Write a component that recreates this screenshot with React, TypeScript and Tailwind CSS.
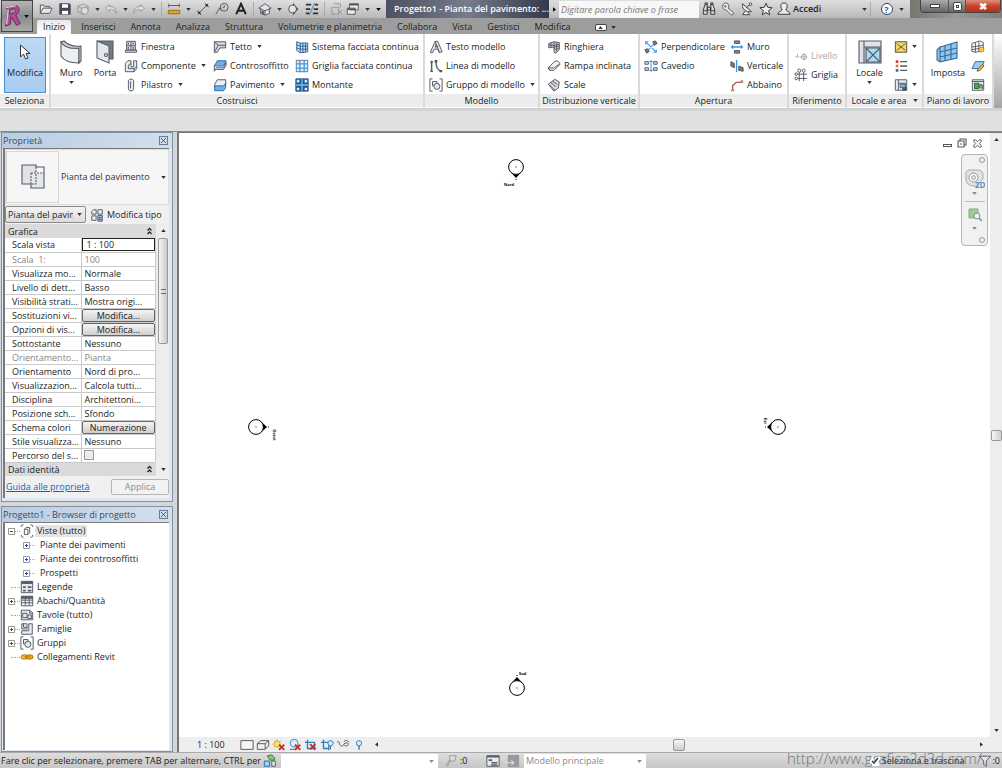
import type { ReactNode } from 'react'

interface GlyphProps {
  children: ReactNode
  className?: string
  box?: string
}

function Glyph({ children, className = 'size-3.5', box = '0 0 16 16' }: GlyphProps) {
  return (
    <svg viewBox={box} className={`shrink-0 ${className}`} fill="none" stroke="#555b65" strokeWidth="1.1" aria-hidden="true">
      {children}
    </svg>
  )
}

function Caret({ className = 'text-[#333]' }: { className?: string }) {
  return (
    <svg viewBox="0 0 6 4" className={`h-[3px] w-[5px] shrink-0 ${className}`} aria-hidden="true">
      <path d="M0 0h6L3 4z" fill="currentColor" />
    </svg>
  )
}

const icons = {
  open: <Glyph><path d="M1.500 13V3.500h4l1 1.500H12v2M1.500 13l3-6H15l-3 6z" fill="#e8e8e8" /></Glyph>,
  save: <Glyph><path d="M2 2h11l1 1v11H2z" fill="#3f4650" /><path d="M4.500 2.500h7v4h-7zM4.500 10h7v4h-7z" fill="#fff" stroke="none" /></Glyph>,
  sync: <Glyph><path d="M2 5l6-3 6 3v6l-6 3-6-3zM2 5l6 3 6-3M8 8v6" stroke="#999" /><circle cx="10" cy="10" r="4" fill="#ddd" stroke="#999" /></Glyph>,
  undo: <Glyph><path d="M6 3L1.500 7 6 11V9c4-1 6 0 8 4 0-6-3-8-8-8z" stroke="#999" fill="#ddd" /></Glyph>,
  redo: <Glyph><path d="M10 3l4.500 4L10 11V9c-4-1-6 0-8 4 0-6 3-8 8-8z" stroke="#999" fill="#ddd" /></Glyph>,
  measure: <Glyph><path d="M2 2v4M14 2v4M2 4h12" /><path d="M1.500 9.500h13v4h-13z" fill="#e3a22a" stroke="#a06c12" /></Glyph>,
  dimension: <Glyph><path d="M3 13L13 3M1 10l5 5M10 1l5 5" /><path d="M2 14l1-4 3 3zM14 2l-4 1 3 3z" fill="#333" stroke="none" /></Glyph>,
  tag: <Glyph><path d="M1 14l4-7 2 3M5 7h2" /><circle cx="10.500" cy="6" r="4.500" /><path d="M10.500 3.500v3h-2" /></Glyph>,
  text: <Glyph><path d="M2.500 14L8 2l5.500 12M4.500 10h7" stroke="#222" strokeWidth="2.200" /></Glyph>,
  cube: <Glyph><path d="M1 7l7-5 7 5-2 1v5l-5 2-5-2V8z" fill="#e4e4e4" /><path d="M1 7l7 3 7-3M8 10v5" /><path d="M4.500 10v3l2 1v-3z" fill="#555" /></Glyph>,
  section: <Glyph><path d="M8 1l6 7-6 7z" fill="#333" stroke="none" /><circle cx="7.500" cy="8" r="4.500" fill="#e4e4e4" /></Glyph>,
  thinLines: <Glyph><path d="M1 3h6M1 8h5M1 13h4M11 3h4M10 8h5M9 13h6" strokeWidth="2" stroke="#333" /><path d="M5 15L11 1" stroke="#3b8be0" /></Glyph>,
  closeHidden: <Glyph><path d="M4 2h8v4M2 6h8v8H2zM9 9l5 5M14 9l-5 5" stroke="#999" /></Glyph>,
  switchWin: <Glyph><path d="M4 2h10v7H4zM1.500 7h9v7h-9z" fill="#eee" /><path d="M4 3h10M1.500 8h9" strokeWidth="2" /></Glyph>,
  binoculars: <Glyph><path d="M1.500 9l2-6h2.500v11H1.500zM14.500 9l-2-6H10v11h4.500zM6 6h4v3H6zM3.500 3V1h2.500v2M10 3V1h2.500v2M1.500 10H6M10 10h4.500" fill="#ddd" stroke="#333" /></Glyph>,
  key: <Glyph><path d="M2 5a3.500 3.500 0 1 1 6 2l6 5v2l-2 1-6-6a3.500 3.500 0 0 1-4-4z" fill="#eee" /><circle cx="5" cy="5" r="1" /></Glyph>,
  dish: <Glyph><path d="M3 2c-1 6 3 10 10 9zM7 7l4-4M6 10l-3 4.500h8L9 11.500" fill="#eee" stroke="#444" /><circle cx="12" cy="2.500" r="1.500" fill="#eee" stroke="#444" /></Glyph>,
  star: <Glyph><path d="M8 1.500l2 4.500 5 .5-4 3.300 1.300 5L8 12l-4.300 2.800L5 9.800 1 6.500 6 6z" fill="#eee" stroke="#333" /></Glyph>,
  user: <Glyph><path d="M8 1c5 0 4 6 2 8 1 2 4 1 5 5H1c1-4 4-3 5-5C4 7 3 1 8 1z" fill="#eee" stroke="#333" /></Glyph>,
  finestra: <Glyph><path d="M3 1.500h10v10H3zM1.500 14h13v-2.500h-13zM8 1.500v10M3 6.500h10" fill="#dfe3e8" /><path d="M5 3v2M10.500 3v2M5 8v2M10.500 8v2" strokeWidth="1.500" /></Glyph>,
  componente: <Glyph><path d="M1.500 5l3-3H8v7h3V2h3.500v9l-3 3.500h-10z" fill="#e8ebef" /><path d="M8 5L5 7v4h6.500v3.500M11.500 11l3-2" /></Glyph>,
  pilastro: <Glyph><path d="M5 3.500c0-3 6-3 6 0v9c0 3-6 3-6 0zM7.500 4v8" fill="#e8ebef" /></Glyph>,
  tetto: <Glyph><path d="M1.500 2h13v7H8l-3 5H1.500z" fill="#d4d8de" /><path d="M1.500 14L6 6h8.500M6 6L1.500 2" /></Glyph>,
  controsoffitto: <Glyph><path d="M5 2h10l-3 6H1.500z" fill="#6cb2ee" stroke="#2c6cab" /><path d="M1.500 8v6l2.500-4h8l3-6v3l-3 5H4" fill="#e8ebef" /></Glyph>,
  pavimento: <Glyph><path d="M5 2h9.500v5L12 11H2V7z" fill="#eceff2" /><path d="M2 9h10l2.500-3v5L12 14.500H2z" fill="#6cb2ee" stroke="#2c6cab" /></Glyph>,
  sistema: <Glyph><path d="M2 2l4 1.500h8.500v10L6 14.500 2 12z" fill="#cfe5f8" stroke="#2c5f91" /><path d="M6 3.500v11M9 3.500v11M12 3.500v10M2 5.500l4 1.500h8.500M2 9l4 1.500h8.500" stroke="#2c5f91" /></Glyph>,
  griglia: <Glyph><path d="M1.500 1.500h13v13h-13z" fill="#e4f1fc" stroke="#6b7683" /><path d="M5.500 1v14M10.500 1v14M1 5.500h14M1 10.500h14" stroke="#4597df" strokeWidth="1.500" /></Glyph>,
  montante: <Glyph><path d="M1 1h14v14H1z" fill="#1f5c94" stroke="#1f4d79" /><path d="M2 2h3v3H2zM11 2h3v3h-3zM2 11h3v3H2zM11 11h3v3h-3z" fill="#d5ebfb" stroke="none" /><path d="M1 8h14M8 1v14" stroke="#79bdf5" strokeWidth="1.500" /></Glyph>,
  testo: <Glyph><path d="M1.500 14L7 1.500h3l5 12-3 1-2-4H6l-2 4zM7 8l1-3 1.500 3z" fill="#e2e5e9" /><path d="M7 1.500l5 13" /></Glyph>,
  linea: <Glyph><path d="M3 2v12M1.500 3.500h3M1.500 14h3M8 2c0 7 1 11 7 12" strokeWidth="1.600" /><path d="M6.500 1h3v3h-3zM12 12.500h3v2.500h-3z" fill="#555" stroke="none" /></Glyph>,
  gruppo: <Glyph><path d="M4 1H1v14h3M12 1h3v14h-3" /><path d="M4 4h5v5H4z" fill="#eee" /><circle cx="9" cy="9.500" r="3.500" fill="#e2e5e9" /></Glyph>,
  ringhiera: <Glyph><path d="M2 4l6-2 6 1v8l-4 4-2-1V8L2 9zM2 6h6l6-1M8 2v8M11 3v10M4.500 3v6M8 8l6-1M9 11l5-2" fill="#cdd1d7" /></Glyph>,
  rampa: <Glyph><path d="M1.500 10L9 2.500c3-1 6 1 5.500 4L8 13H3z" fill="#f1f3f5" /><path d="M3 13l-1.500-3 6 .5L14 6" /></Glyph>,
  scale: <Glyph><path d="M1.500 7L9 1.500l5 3-1 7-5 3.500zM4 5l6 5M6 3.500l6 4M3 8l6 6" fill="#d8dbe0" /></Glyph>,
  perpendicolare: <Glyph><path d="M3 3l10 10M3 13L13 3M2 5V2h3M14 11v3h-3" stroke="#3b94e6" strokeWidth="1.300" /><path d="M10 2l3-1 2 3-3 2zM1 11l3-1 2 3-3 2z" fill="#777" /></Glyph>,
  cavedio: <Glyph><path d="M1 3h4v3H1zM1 10h4v3H1zM11 3h4v3h-4zM11 10h4v3h-4z" fill="#ddd" /><path d="M8 1v14M6 3h4M6 13h4" stroke="#3b94e6" /></Glyph>,
  muroApertura: <Glyph><path d="M5 1h6v3H5zM5 12h6v3H5z" fill="#888" /><path d="M1 8h14M3 6v4M13 6v4" stroke="#3b94e6" strokeWidth="1.500" /></Glyph>,
  verticale: <Glyph><path d="M1 3l4 2v5L1 8zM10 8l5 2v4l-5-1z" fill="#777" /><path d="M7.500 1v14" stroke="#3b94e6" strokeWidth="1.500" /></Glyph>,
  abbaino: <Glyph><path d="M3 14V9l4-4h8" stroke="#c0504a" strokeWidth="1.600" /><path d="M1 13h4v2H1zM12 2.500h3v3h-3z" fill="#999" stroke="none" /></Glyph>,
  livello: <Glyph><path d="M1 9h8" stroke="#aaa" strokeDasharray="2 1" /><circle cx="11.500" cy="9" r="3" stroke="#aaa" /><path d="M11.500 5v8M8 9h7M4 6v3" stroke="#aaa" /></Glyph>,
  grigliaRif: <Glyph><path d="M6 5v10M11 5v10M4 7h11M4 12h11" /><circle cx="6" cy="3" r="1.800" /><circle cx="11" cy="3" r="1.800" /><circle cx="2.500" cy="7" r="1.500" /><circle cx="2.500" cy="12" r="1.500" /></Glyph>,
  tagLocale: <Glyph><path d="M1.500 2h13v12h-13z" fill="#f7d65c" stroke="#54503c" /><path d="M3 4l10 8M13 4L3 12" /></Glyph>,
  legenda: <Glyph><path d="M7 3h8M7 8h8M7 13h8" strokeWidth="1.500" /><path d="M2 1.500h3v3H2z" fill="#c33" stroke="none" /><path d="M2 6.500h3v3H2z" fill="#e57822" stroke="none" /><path d="M2 11.500h3v3H2z" fill="#2b67b5" stroke="none" /></Glyph>,
  area: <Glyph><path d="M1.500 2h13v12h-13zM5 2v12M5 6h9" fill="#e8ebef" /><path d="M7 7h6v4H7z" fill="#74b9e8" /><path d="M10 11h4v3h-4z" fill="#555" /></Glyph>,
  mostra: <Glyph><path d="M1 4l9-3 4 2v9l-9 2-4-1zM5 3v11M9 2v11M1 8l13-2M1 11l13-2" /><circle cx="12" cy="11" r="2.800" fill="#ffcb45" stroke="#c98b16" /></Glyph>,
  piano: <Glyph><path d="M5 3h10l-3 8H1z" fill="#9dd0f7" stroke="#2c6cab" /><path d="M7 14l1-3 5-5 2 2-5 5z" fill="#f0b04a" stroke="#8a5d1a" /></Glyph>,
  visualizzatore: <Glyph><path d="M1.500 2h13v12h-13zM1.500 4h13" fill="#e8ebef" /><path d="M4 6h5v6H4z" fill="#50a152" stroke="#2f6b31" /><path d="M10 7l3 1v4l-3-1z" fill="#7fc481" /></Glyph>,
  tipo: <Glyph><path d="M2 4l2-2h3v5H2zM9 2h5v5H9zM2 9h5v5H2z" fill="#edf1f5" /><path d="M9 8.500h5V15H9z" fill="#91bde8" /><path d="M10 11h3M10 13h3" /></Glyph>,
  viste: <Glyph><path d="M4 1H1.500v3M12 1h2.500v3M4 15H1.500v-3M12 15h2.500v-3" strokeDasharray="2 1" /><path d="M5 6l2-2h4v6l-2 2H5zM5 6h4v6" /></Glyph>,
  legende: <Glyph><path d="M1.500 1.500h13v13h-13z" fill="#e5e8ec" /><path d="M1.500 3h13" strokeWidth="3" /><path d="M3.500 8h3M9 8h4M3.500 12h3M9 12h4" strokeWidth="2" /></Glyph>,
  abachi: <Glyph><path d="M1.500 2.500h13v11h-13zM1.500 7h13M1.500 10h13M6 3v10M10.500 3v10" fill="#f4f5f6" /><path d="M1.500 4h13" strokeWidth="3" /></Glyph>,
  tavole: <Glyph><path d="M1.500 2.500h10l3 3v8h-13z" fill="#e5e8ec" /><path d="M3 6h5v5H3zM9 8h4v4H9zM11 3v3h3" /></Glyph>,
  famiglie: <Glyph><path d="M2 2h6v6H2zM10 2h4v12H2v-4h8z" fill="#e8ebef" /><path d="M4 2v4h4" /></Glyph>,
  collegamenti: <Glyph><g stroke="#a96f09"><ellipse cx="5" cy="8" rx="4" ry="2.500" fill="#ffc93d" /><ellipse cx="11" cy="8" rx="4" ry="2.500" fill="#f5b323" /><path d="M4 8h8" /></g></Glyph>,
  dettaglio: <Glyph><path d="M1 3h14v10H1z" fill="#f5f5f5" /></Glyph>,
  stile: <Glyph><path d="M1.500 6.500l4-3.500h9v6l-4 4h-9zM1.500 6.500h9v6.500M10.500 6.500l4-3.500" /></Glyph>,
  sole: <Glyph><circle cx="6" cy="7" r="3.500" fill="#ffe27a" stroke="#e0a118" /><path d="M6 1v2M1 7H0M2 3l1 1M2 11l1-1M10 3L9 4" stroke="#e0a118" /><path d="M8 7.500l6 6M14 7.500l-6 6" stroke="#cf2a20" strokeWidth="2.200" /></Glyph>,
  ombre: <Glyph><circle cx="7" cy="6" r="4.500" fill="#dceefb" stroke="#3f86c6" /><path d="M2 13h7" stroke="#666" /><path d="M8 7.500l6 6M14 7.500l-6 6" stroke="#cf2a20" strokeWidth="2.200" /></Glyph>,
  taglio: <Glyph><path d="M4 2v10h10M1 5h11v9" stroke="#2f80c8" strokeWidth="1.600" /><path d="M7 7l6 6M13 7l-6 6" stroke="#cf2a20" strokeWidth="2.200" /></Glyph>,
  regione: <Glyph><path d="M4 2v10h6M1 5h9v9" stroke="#2f80c8" strokeWidth="1.600" /><circle cx="12" cy="6" r="3" fill="#d8efff" stroke="#2f80c8" /><path d="M12 9v4" /></Glyph>,
  occhiali: <Glyph><path d="M1 5c2-2 3 0 3 2 1 3 4 3 5 0 1-2 5-2 5 0s-3 3-5 1M9 4c2-2 5-1 6 1" /></Glyph>,
  lampada: <Glyph><circle cx="8" cy="6" r="3" fill="#d5ecff" stroke="#2f80c8" /><path d="M8 9v4" strokeWidth="2" stroke="#5a8cb8" /></Glyph>,
  worksets: <Glyph><path d="M5 2l5-1 3 3v3H8z" fill="#7ccf76" stroke="#35803a" /><path d="M1.500 8h6v6h-6z" fill="#9ed0f4" stroke="#2c6cab" /><path d="M10 8h4v6h-4z" fill="#e8ebef" /></Glyph>,
  filtro: <Glyph><path d="M1.500 2.500h13L9.500 8v6l-3-2V8z" fill="#dfe5ea" /></Glyph>,
}

function Sep() {
  return <span className="mx-[3px] h-3.5 w-px bg-[#a9a9a9]" />
}

function ToolButton({ label, icon, caret, width = 'w-[19px]' }: { label: string; icon: ReactNode; caret?: boolean; width?: string }) {
  return (
    <button aria-label={label} className={`flex h-4 shrink-0 items-center justify-center ${width}`}>
      {icon}
      {caret && <span className="ml-[5px]"><Caret /></span>}
    </button>
  )
}

function TitleBar() {
  return (
    <header className="flex h-[18px] items-center bg-linear-to-b from-[#dedede] to-[#b9b9b9] pl-9">
      <ToolButton label="Apri" icon={icons.open} />
      <ToolButton label="Salva" icon={icons.save} />
      <ToolButton label="Sincronizza" icon={icons.sync} caret width="w-7" />
      <ToolButton label="Annulla" icon={icons.undo} caret width="w-7" />
      <ToolButton label="Ripeti" icon={icons.redo} caret width="w-7" />
      <Sep />
      <ToolButton label="Misura" icon={icons.measure} caret width="w-7" />
      <ToolButton label="Quota allineata" icon={icons.dimension} />
      <ToolButton label="Etichetta" icon={icons.tag} />
      <ToolButton label="Testo" icon={icons.text} />
      <Sep />
      <ToolButton label="Vista 3D" icon={icons.cube} caret width="w-[26px]" />
      <ToolButton label="Sezione" icon={icons.section} />
      <ToolButton label="Linee sottili" icon={icons.thinLines} />
      <Sep />
      <ToolButton label="Chiudi nascoste" icon={icons.closeHidden} width="w-[17px]" />
      <ToolButton label="Cambia finestra" icon={icons.switchWin} caret width="w-[26px]" />
      <button aria-label="Personalizza barra" className="flex w-[15px] justify-center"><Caret className="text-black" /></button>
      <h1 className="flex h-full min-w-0 flex-1 items-center bg-linear-to-r from-[#4c5060] via-[#777c8c] to-[#33384a] pl-2 text-[9px] font-semibold whitespace-nowrap text-white">
        Progetto1 - Pianta del pavimento: ...
      </h1>
      <button aria-label="Espandi ricerca" className="flex w-2.5 justify-center">
        <span className="-rotate-90"><Caret className="text-black" /></span>
      </button>
      <input
        aria-label="Ricerca"
        placeholder="Digitare parola chiave o frase"
        className="h-[17px] w-[140px] bg-[#f7f7f7] px-0.5 text-[9px] italic outline-none placeholder:text-[#777]"
      />
      <ToolButton label="Cerca" icon={icons.binoculars} />
      <ToolButton label="Chiave" icon={icons.key} />
      <ToolButton label="Communication Center" icon={icons.dish} />
      <ToolButton label="Preferiti" icon={icons.star} />
      <button className="flex w-[92px] items-center gap-0.5 pl-0.5 text-[9px] font-semibold">
        {icons.user}
        <span className="flex-1 text-left">Accedi</span>
        <Caret />
      </button>
      <Sep />
      <button aria-label="Guida" className="flex w-9 items-center justify-center gap-1.5">
        <span className="flex size-3 items-center justify-center rounded-full border border-[#345] bg-white text-[9px] leading-none font-bold text-[#1d5fae]">?</span>
        <Caret />
      </button>
      <div className="flex h-full w-[92px] shrink-0 items-start justify-end bg-linear-to-r from-[#77756d] via-[#9a9990] to-[#827f78] pr-px">
        <div className="flex h-[13px] overflow-hidden rounded-b border border-t-0 border-[#444]">
          <button aria-label="Riduci a icona" className="flex w-[27px] items-center justify-center bg-linear-to-b from-[#aaa] to-[#666]">
            <span className="h-1 w-2.5 border border-[#444] bg-white" />
          </button>
          <button aria-label="Ingrandisci" className="flex w-[18px] items-center justify-center border-x border-[#555] bg-linear-to-b from-[#aaa] to-[#666]">
            <span className="flex size-[9px] items-center justify-center rounded-xs border border-[#444] bg-white">
              <span className="size-[3px] border border-[#444]" />
            </span>
          </button>
          <button aria-label="Chiudi" className="flex w-[34px] items-center justify-center bg-linear-to-b from-[#df8d7c] via-[#c9432c] to-[#b5311c] text-[10px] leading-none font-bold text-white">✖</button>
        </div>
      </div>
    </header>
  )
}

const tabs = ['Inizio', 'Inserisci', 'Annota', 'Analizza', 'Struttura', 'Volumetrie e planimetria', 'Collabora', 'Vista', 'Gestisci', 'Modifica']

function TabBar() {
  return (
    <nav className="flex h-4 items-end gap-px bg-[#9d9d9d] pl-[37px]">
      {tabs.map((tab, i) => (
        <button
          key={tab}
          className={i === 0 ? 'h-3.5 rounded-t-xs bg-linear-to-b from-[#e9e9e9] to-white px-1.5 mr-0.5' : 'h-3.5 px-[7px]'}
        >
          {tab}
        </button>
      ))}
      <button aria-label="Riduci barra multifunzione" className="ml-4 flex h-3.5 items-center gap-1">
        <span className="flex h-[7px] w-3 items-center justify-center rounded-xs border border-[#444] bg-white">
          <span className="rotate-180"><Caret /></span>
        </span>
        <Caret />
      </button>
    </nav>
  )
}

function Group({ title, width, caret, children }: { title: string; width: string; caret?: boolean; children: ReactNode }) {
  return (
    <section className={`flex shrink-0 flex-col border-r-2 border-[#dadada] bg-white ${width}`}>
      <div className="flex h-[60px] items-stretch pt-[3px]">{children}</div>
      <h2 className="flex h-[13px] items-center justify-center gap-1.5 whitespace-nowrap bg-[#ececed]">
        {title}
        {caret && <Caret />}
      </h2>
    </section>
  )
}

function Item({ icon, label, caret, disabled }: { icon: ReactNode; label: string; caret?: boolean; disabled?: boolean }) {
  return (
    <button disabled={disabled} className="flex h-[19px] items-center gap-[3px] whitespace-nowrap disabled:text-[#aaa]">
      {icon}
      {label}
      {caret && <span className="ml-0.5"><Caret /></span>}
    </button>
  )
}

function Large({ icon, label, caret, width }: { icon: ReactNode; label: string; caret?: boolean; width: string }) {
  return (
    <button className={`flex flex-col items-center ${width}`}>
      <span className="flex h-[30px] items-center">{icon}</span>
      <span className="leading-3">{label}</span>
      {caret && <span className="mt-0.5"><Caret /></span>}
    </button>
  )
}

function IconButton({ icon, label, caret }: { icon: ReactNode; label: string; caret?: boolean }) {
  return (
    <button aria-label={label} className="flex h-[19px] items-center gap-1">
      {icon}
      {caret && <Caret />}
    </button>
  )
}

function Ribbon() {
  return (
    <div className="flex h-[75px] border-b border-[#cfcfcf] bg-linear-to-b from-white to-[#a5a5a5]">
      <Group title="Seleziona" width="w-[51px]">
        <button className="ml-1 flex h-[56px] w-[42px] flex-col items-center border border-[#4c8ecb] bg-linear-to-b from-[#bcd9f5] to-[#a9cdf0] pt-1.5">
          <svg viewBox="0 0 12 17" className="h-[17px] w-3" aria-hidden="true">
            <path d="M1.500 1v12l3-3 2 5 2.500-1-2-4.500H11z" fill="#fff" stroke="#333" />
          </svg>
          <span className="mt-1.5 leading-3">Modifica</span>
        </button>
      </Group>
      <Group title="Costruisci" width="w-[374px]">
        <Large
          width="ml-[3px] w-[34px]"
          label="Muro"
          caret
          icon={
            <Glyph className="h-6 w-6" box="0 0 24 24">
              <path d="M2 2c4 5 9 7 18 6v15C12 23 5 21 2 16z" fill="#eceff2" />
              <path d="M2 2l3-1c4 4 9 6 17 5v15l-2 2V8C12 9 5 7 2 2z" fill="#d0d4da" />
            </Glyph>
          }
        />
        <Large
          width="w-[34px]"
          label="Porta"
          icon={
            <Glyph className="h-6 w-6" box="0 0 24 24">
              <path d="M4 1h16v18h-4" fill="#737a84" />
              <path d="M4 1l12 5v17L4 18z" fill="#e4e7eb" />
              <circle cx="13" cy="15" r="1.500" />
            </Glyph>
          }
        />
        <div className="ml-0.5 w-[89px]">
          <Item icon={icons.finestra} label="Finestra" />
          <Item icon={icons.componente} label="Componente" caret />
          <Item icon={icons.pilastro} label="Pilastro" caret />
        </div>
        <div className="w-[82px]">
          <Item icon={icons.tetto} label="Tetto" caret />
          <Item icon={icons.controsoffitto} label="Controsoffitto" />
          <Item icon={icons.pavimento} label="Pavimento" caret />
        </div>
        <div>
          <Item icon={icons.sistema} label="Sistema facciata continua" />
          <Item icon={icons.griglia} label="Griglia facciata continua" />
          <Item icon={icons.montante} label="Montante" />
        </div>
      </Group>
      <Group title="Modello" width="w-[115px]">
        <div className="pl-1">
          <Item icon={icons.testo} label="Testo modello" />
          <Item icon={icons.linea} label="Linea di modello" />
          <Item icon={icons.gruppo} label="Gruppo di modello" caret />
        </div>
      </Group>
      <Group title="Distribuzione verticale" width="w-[100px]">
        <div className="pl-[7px]">
          <Item icon={icons.ringhiera} label="Ringhiera" />
          <Item icon={icons.rampa} label="Rampa inclinata" />
          <Item icon={icons.scale} label="Scale" />
        </div>
      </Group>
      <Group title="Apertura" width="w-[149px]">
        <div className="w-[90px] pl-1">
          <Item icon={icons.perpendicolare} label="Perpendicolare" />
          <Item icon={icons.cavedio} label="Cavedio" />
        </div>
        <div>
          <Item icon={icons.muroApertura} label="Muro" />
          <Item icon={icons.verticale} label="Verticale" />
          <Item icon={icons.abbaino} label="Abbaino" />
        </div>
      </Group>
      <Group title="Riferimento" width="w-[58px]">
        <div className="flex flex-col justify-center pl-[5px]">
          <Item icon={icons.livello} label="Livello" disabled />
          <Item icon={icons.grigliaRif} label="Griglia" />
        </div>
      </Group>
      <Group title="Locale e area" width="w-[77px]" caret>
        <Large
          width="ml-1 w-[37px]"
          label="Locale"
          caret
          icon={
            <Glyph className="h-6 w-6" box="0 0 24 24">
              <path d="M1 1h22v22H1z" fill="#dfe3e8" />
              <path d="M6 1v22M6 7h17" />
              <path d="M8 8h14v14H8z" fill="#a8dcf5" />
              <path d="M8 8l14 14M22 8L8 22" />
            </Glyph>
          }
        />
        <div className="ml-1.5">
          <IconButton label="Etichetta locale" icon={icons.tagLocale} caret />
          <IconButton label="Legenda" icon={icons.legenda} />
          <IconButton label="Area" icon={icons.area} caret />
        </div>
      </Group>
      <Group title="Piano di lavoro" width="w-[70px]">
        <Large
          width="ml-[3px] w-[42px]"
          label="Imposta"
          icon={
            <Glyph className="h-6 w-6" box="0 0 24 24">
              <path d="M4 7l17-5v16L4 22l-3-2V10z" fill="#8fc6f0" stroke="#376a96" />
              <path d="M4 7v15M9 6v15M15 4v15M4 12l17-4M4 17l17-4" stroke="#376a96" />
            </Glyph>
          }
        />
        <div className="ml-0.5">
          <IconButton label="Mostra" icon={icons.mostra} />
          <IconButton label="Piano di riferimento" icon={icons.piano} />
          <IconButton label="Visualizzatore" icon={icons.visualizzatore} />
        </div>
      </Group>
    </div>
  )
}

function PaneHeader({ title }: { title: string }) {
  return (
    <div className="flex h-[15px] items-center justify-between bg-linear-to-r from-[#b9cde2] to-[#d2dfed] pr-1 pl-px text-[#3c4b5e]">
      <h2>{title}</h2>
      <button aria-label={`Chiudi ${title}`} className="flex size-[9px] items-center justify-center border border-[#6b7d92]">
        <svg viewBox="0 0 6 6" className="size-[5px]" stroke="#34465c" aria-hidden="true"><path d="M0 0l6 6M6 0L0 6" /></svg>
      </button>
    </div>
  )
}

type Property = { name: string; value: string; kind?: 'input' | 'button' | 'check' | 'readonly' }

const properties: Property[] = [
  { name: 'Scala vista', value: '1 : 100', kind: 'input' },
  { name: 'Scala  1:', value: '100', kind: 'readonly' },
  { name: 'Visualizza mo...', value: 'Normale' },
  { name: 'Livello di dett...', value: 'Basso' },
  { name: 'Visibilità strati...', value: 'Mostra origi...' },
  { name: 'Sostituzioni vi...', value: 'Modifica...', kind: 'button' },
  { name: 'Opzioni di vis...', value: 'Modifica...', kind: 'button' },
  { name: 'Sottostante', value: 'Nessuno' },
  { name: 'Orientamento...', value: 'Pianta', kind: 'readonly' },
  { name: 'Orientamento', value: 'Nord di pro...' },
  { name: 'Visualizzazion...', value: 'Calcola tutti...' },
  { name: 'Disciplina', value: 'Architettoni...' },
  { name: 'Posizione sch...', value: 'Sfondo' },
  { name: 'Schema colori', value: 'Numerazione', kind: 'button' },
  { name: 'Stile visualizza...', value: 'Nessuno' },
  { name: 'Percorso del s...', value: '', kind: 'check' },
]

function PropertyValue({ property }: { property: Property }) {
  const { name, value, kind } = property
  if (kind === 'input') {
    return <input aria-label={name} defaultValue={value} className="block h-[13px] w-full border border-[#222] bg-white px-1 leading-3" />
  }
  if (kind === 'button') {
    return (
      <button className="block h-[13px] w-full rounded-xs border border-[#666] bg-linear-to-b from-[#f4f4f4] to-[#cfcfcf] leading-[11px]">
        {value}
      </button>
    )
  }
  if (kind === 'check') {
    return <input type="checkbox" aria-label={name} className="ml-0.5 block size-2.5 appearance-none border border-[#999] bg-[#ececec]" />
  }
  return <span className="block h-[13px] pl-[3px] leading-[13px]">{value}</span>
}

function SectionRow({ title }: { title: string }) {
  return (
    <tr className="h-3.5 bg-[#dadada]">
      <th colSpan={2} className="px-[3px] text-left font-normal">
        <button className="flex w-full items-center justify-between leading-[13px]">
          {title}
          <svg viewBox="0 0 7 8" className="h-2 w-[7px]" fill="none" stroke="#222" aria-hidden="true"><path d="M1.500 3.500l2-2 2 2M1.500 7l2-2 2 2" strokeWidth="1.300" /></svg>
        </button>
      </th>
    </tr>
  )
}

function PropertiesPane() {
  return (
    <section className="border border-[#8190a4] bg-[#dde6f1]">
      <PaneHeader title="Proprietà" />
      <div className="mr-[3px] mb-[3px] ml-px border-t border-l-2 border-[#7a7a7a] bg-[#f0f0f0]">
        <button className="flex h-14 w-full items-center border border-[#ddd] bg-[#f6f6f6] pr-0.5">
          <span className="flex h-[52px] w-[53px] items-center justify-center border border-[#d6d6d6]">
            <Glyph className="size-[26px]" box="0 0 26 26">
              <path d="M2 1h14v19H2z" fill="#dfe2e7" stroke="none" />
              <path d="M11 9h13v15H11z" fill="#e3e6ea" stroke="none" />
              <path d="M11 20H2V1h14v2h8v6M11 20v4h13V9" />
              <path d="M16 3v6M11 9h13M11 9v11h5V9" strokeDasharray="2 1" />
            </Glyph>
          </span>
          <span className="flex-1 pl-0.5 text-left text-[#333]">Pianta del pavimento</span>
          <Caret />
        </button>
        <div className="flex h-[19px] items-center">
          <div className="flex h-[17px] w-[81px] items-center justify-between rounded-xs border border-[#8a8a8a] bg-linear-to-b from-[#f4f4f4] to-[#dcdcdc] pr-[3px]">
            <select aria-label="Filtro proprietà" className="w-[67px] appearance-none overflow-hidden bg-transparent pl-0.5 outline-none">
              <option>Pianta del pavimento</option>
            </select>
            <Caret />
          </div>
          <button className="ml-1 flex flex-1 items-center gap-[3px] whitespace-nowrap">
            {icons.tipo}
            Modifica tipo
          </button>
        </div>
        <div className="flex">
          <table className="flex-1 table-fixed border-collapse bg-white">
            <tbody>
              <SectionRow title="Grafica" />
              {properties.map((property) => (
                <tr key={property.name} className={property.kind === 'readonly' ? 'h-3.5 text-[#858585]' : 'h-3.5'}>
                  <th className="w-[76px] border-r border-b border-[#c9c9c9] p-0 pl-[7px] text-left leading-[13px] font-normal whitespace-pre">
                    {property.name}
                  </th>
                  <td className="border-r border-b border-[#c9c9c9] p-0 leading-[13px] whitespace-nowrap"><PropertyValue property={property} /></td>
                </tr>
              ))}
              <SectionRow title="Dati identità" />
            </tbody>
          </table>
          <div className="flex w-[13px] flex-col items-center bg-[#ededed] pl-px">
            <button aria-label="Scorri su" className="flex h-3.5 rotate-180 items-center"><Caret /></button>
            <div className="flex h-[106px] w-2.5 items-center justify-center rounded-xs border border-[#999] bg-linear-to-r from-[#f5f5f5] to-[#c9c9c9]">
              <span className="h-[5px] w-[5px] border-y border-[#666]" />
            </div>
            <button aria-label="Scorri giù" className="mt-auto flex h-3.5 items-center"><Caret /></button>
          </div>
        </div>
        <div className="flex h-[22px] items-center justify-between">
          <a href="#guida" className="pl-px text-[#0a66c8] underline">Guida alle proprietà</a>
          <button disabled className="h-4 w-[58px] rounded-xs border border-[#b5b5b5] bg-[#f2f2f2] text-[#8c8c8c]">Applica</button>
        </div>
      </div>
    </section>
  )
}

type Node = { label: string; icon?: ReactNode; toggle?: '+' | '-'; child?: boolean; selected?: boolean }

const tree: Node[] = [
  { label: 'Viste (tutto)', icon: icons.viste, toggle: '-', selected: true },
  { label: 'Piante dei pavimenti', toggle: '+', child: true },
  { label: 'Piante dei controsoffitti', toggle: '+', child: true },
  { label: 'Prospetti', toggle: '+', child: true },
  { label: 'Legende', icon: icons.legende },
  { label: 'Abachi/Quantità', icon: icons.abachi, toggle: '+' },
  { label: 'Tavole (tutto)', icon: icons.tavole },
  { label: 'Famiglie', icon: icons.famiglie, toggle: '+' },
  { label: 'Gruppi', icon: icons.gruppo, toggle: '+' },
  { label: 'Collegamenti Revit', icon: icons.collegamenti },
]

function Toggle({ sign }: { sign?: '+' | '-' }) {
  if (!sign) {
    return <span className="flex w-[7px] justify-end"><span className="w-1 border-t border-dotted border-[#aaa]" /></span>
  }
  return (
    <button aria-label={sign === '+' ? 'Espandi' : 'Comprimi'} className="flex size-[7px]">
      <svg viewBox="0 0 7 7" className="size-[7px]" fill="#fff" stroke="#999" aria-hidden="true">
        <path d="M.5 .5h6v6h-6z" />
        <path d={sign === '+' ? 'M2 3.500h3M3.500 2v3' : 'M2 3.500h3'} stroke="#2b4c9b" />
      </svg>
    </button>
  )
}

function BrowserPane() {
  return (
    <section className="mt-1 flex min-h-0 flex-1 flex-col border border-[#8190a4] bg-[#dde6f1]">
      <PaneHeader title="Progetto1 - Browser di progetto" />
      <div className="mr-[3px] mb-px ml-px flex-1 border-t border-l-2 border-[#7a7a7a] bg-white">
        <ul className="pt-px">
          {tree.map((node) => (
            <li key={node.label} className={node.child ? 'flex h-3.5 items-center pl-[18px]' : 'flex h-3.5 items-center pl-[3px]'}>
              <Toggle sign={node.toggle} />
              <span className={node.child ? 'mr-0.5 w-[5px] border-t border-dotted border-[#aaa]' : 'w-[5px] border-t border-dotted border-[#aaa]'} />
              {node.icon}
              <span className={node.selected ? 'ml-px bg-[#e4e4e4] px-0.5 leading-3' : 'ml-px px-0.5 leading-3'}>{node.label}</span>
            </li>
          ))}
        </ul>
      </div>
    </section>
  )
}

// Elevation marker: a circle with a filled arrow that points at the model
function Marker({ place, turn, name, nameClass }: { place: string; turn: string; name: string; nameClass: string }) {
  return (
    <div className={`absolute size-4 ${place}`}>
      <svg viewBox="0 0 16 22" className={`h-[22px] w-4 origin-[8px_8px] ${turn}`} aria-hidden="true">
        <path d="M3 13.500h10L8 19z" fill="#000" />
        <circle cx="8" cy="8" r="7.400" fill="#fff" stroke="#000" />
        <path d="M7.500 8h1M8 20v1" stroke="#000" />
      </svg>
      <span className={`absolute text-[4px] leading-none font-bold text-black ${nameClass}`}>{name}</span>
    </div>
  )
}

function NavBar() {
  return (
    <div className="absolute top-[21px] right-0.5 flex h-[92px] w-[27px] flex-col items-center rounded border border-[#b5b5b5] bg-[#f1f1f1] py-0.5">
      <button aria-label="Chiudi barra" className="mr-0.5 size-1.5 self-end rounded-full border border-[#999]" />
      <button aria-label="Ruota di navigazione 2D" className="mt-1.5 flex flex-col items-center">
        <svg viewBox="0 0 20 20" className="size-5" aria-hidden="true">
          <path d="M3 1h10a5 5 0 0 1 5 6v3l-7 7H8a7 7 0 0 1-7-7V3z" fill="#e1e3e6" stroke="#aaa" />
          <circle cx="8.500" cy="8.500" r="4.500" fill="#f7f7f7" stroke="#999" />
          <circle cx="8.500" cy="8.500" r="2" fill="#ddd" stroke="#aaa" />
          <text x="10" y="19" fontSize="8" fontWeight="bold" fill="#568fc7">2D</text>
        </svg>
        <Caret className="mt-[3px] text-[#888]" />
      </button>
      <span className="my-1.5 h-px w-5 bg-[#bbb]" />
      <button aria-label="Zoom regione" className="flex flex-col items-center">
        <svg viewBox="0 0 14 14" className="size-3.5" aria-hidden="true">
          <path d="M1 1h9v9H1z" fill="#9cce92" stroke="#83b079" />
          <circle cx="9" cy="8" r="3" fill="#eef6fa" stroke="#888" />
          <path d="M11 10l3 3" stroke="#888" strokeWidth="1.500" />
        </svg>
        <Caret className="mt-[5px] text-[#888]" />
      </button>
      <button aria-label="Opzioni barra" className="mt-auto mr-0.5 size-1.5 self-end rounded-full border border-[#999]" />
    </div>
  )
}

function DrawingWindow() {
  return (
    <main className="flex min-w-0 flex-1 flex-col border-t border-l-2 border-[#777] bg-white">
      <div className="flex min-h-0 flex-1">
        <div className="relative min-w-0 flex-1 overflow-hidden">
          <Marker place="top-[26px] left-[329px]" turn="" name="Nord" nameClass="top-6 right-2.5" />
          <Marker place="top-[286px] left-[69px]" turn="-rotate-90" name="Ovest" nameClass="top-3.5 left-5 rotate-90" />
          <Marker place="top-[286px] left-[591px]" turn="rotate-90" name="Est" nameClass="top-0 right-[18px] rotate-90" />
          <Marker place="top-[547px] left-[330px]" turn="rotate-180" name="Sud" nameClass="-top-2 left-2.5" />
          <div className="absolute top-[5px] right-2 flex items-center gap-1">
            <button aria-label="Riduci vista" className="mt-1 mr-px h-[3px] w-[9px] border border-[#555]" />
            <button aria-label="Ripristina vista" className="flex">
              <Glyph className="size-2.5" box="0 0 10 10"><path d="M1 3h6v6H1zM3 3V1h6v6H7M3 6h2" /></Glyph>
            </button>
            <button aria-label="Chiudi vista" className="ml-0.5 flex">
              <Glyph className="size-[9px]" box="0 0 10 10"><path d="M1 1h2l2 2 2-2h2v2L7 5l2 2v2H7L5 7 3 9H1V7l2-2-2-2z" /></Glyph>
            </button>
          </div>
          <NavBar />
        </div>
        <div className="flex w-3 flex-col items-center justify-between bg-[#ededed] py-0.5">
          <button aria-label="Scorri su" className="flex h-2.5 rotate-180 items-center"><Caret /></button>
          <div className="size-[11px] rounded-xs border border-[#999] bg-linear-to-r from-[#f5f5f5] to-[#cfcfcf]" />
          <button aria-label="Scorri giù" className="flex h-2.5 items-center"><Caret /></button>
        </div>
      </div>
      <div className="flex h-[15px] items-center bg-[#eeeeee] pl-[18px]">
        <button className="w-[43px] text-left">1 : 100</button>
        <div className="flex items-center gap-0.5">
          <button aria-label="Livello di dettaglio" className="flex">{icons.dettaglio}</button>
          <button aria-label="Stile di visualizzazione" className="flex">{icons.stile}</button>
          <button aria-label="Percorso del sole" className="flex">{icons.sole}</button>
          <button aria-label="Ombre" className="flex">{icons.ombre}</button>
          <button aria-label="Taglia vista" className="flex">{icons.taglio}</button>
          <button aria-label="Mostra regione" className="flex">{icons.regione}</button>
          <button aria-label="Nascondi temporaneamente" className="flex">{icons.occhiali}</button>
          <button aria-label="Mostra elementi nascosti" className="flex">{icons.lampada}</button>
        </div>
        <button aria-label="Scorri a sinistra" className="ml-2 flex rotate-90"><Caret /></button>
        <div className="flex flex-1 justify-center">
          <div className="size-3 rounded-xs border border-[#999] bg-linear-to-b from-[#f7f7f7] to-[#ccc]" />
        </div>
        <button aria-label="Scorri a destra" className="mr-[18px] flex -rotate-90"><Caret /></button>
      </div>
    </main>
  )
}

function StatusBar() {
  return (
    <footer className="flex h-4 items-center border-t border-[#aaa] bg-linear-to-b from-[#dedede] to-[#c6c6c6] pt-px">
      <p className="w-[263px] shrink-0 pl-px whitespace-nowrap">Fare clic per selezionare, premere TAB per alternare, CTRL per</p>
      {icons.worksets}
      <button aria-label="Workset attivo" className="ml-1 flex h-full w-[157px] items-center justify-end bg-white pr-1"><Caret className="text-[#888]" /></button>
      <span className="ml-1.5 flex w-[42px] items-center gap-0.5">
        <Glyph><path d="M6 2h8l-2 6H7zM6 7l-4 7M7 8l-3 6" stroke="#999" fill="#ddd" /></Glyph>
        :0
      </span>
      <button aria-label="Opzioni di progetto" className="flex"><Glyph><path d="M1 2h14v12H1z" fill="#e8ebef" /><path d="M1 3h14M3 7h4M6 10h7M6 12.500h7" strokeWidth="1.800" /></Glyph></button>
      <button aria-label="Aggiungi a gruppo" className="ml-1.5 flex"><Glyph><path d="M2 1h13v14H2z" fill="#999" stroke="none" /><path d="M1 10h8M6 7l3 3-3 3" stroke="#eee" /></Glyph></button>
      <div className="ml-1 flex h-full w-[122px] items-center bg-white pr-1 text-[#8a8a8a]">
        <select aria-label="Opzione attiva" className="flex-1 appearance-none pl-0.5 outline-none">
          <option>Modello principale</option>
        </select>
        <Caret className="text-[#888]" />
      </div>
      <label className="ml-auto flex items-center gap-0.5 whitespace-nowrap">
        <input type="checkbox" defaultChecked className="size-2.5 accent-white" />
        Seleziona e trascina
      </label>
      <span className="ml-3.5 flex items-center pr-0.5">{icons.filtro}:0</span>
    </footer>
  )
}

export default function App() {
  return (
    <div className="relative flex h-screen flex-col overflow-hidden bg-[#d5d6d8] font-['Open_Sans','Noto_Sans',sans-serif] text-[9px] leading-3 text-[#1c1c1c]">
      <TitleBar />
      <TabBar />
      <button aria-label="Menu applicazione" className="absolute top-0 left-px flex h-8 w-8 items-center border border-[#444] bg-linear-to-b from-[#b5b5b5] via-[#8b8b8b] to-[#a9a9a9]">
        <svg viewBox="0 0 20 26" className="h-6 w-5" aria-hidden="true">
          <path d="M3 4l11-2c5 0 5 8 0 10l5 9-4 2-6-9-1 8-5 2 3-18z" fill="#b04d94" stroke="#6d245a" />
          <path d="M8 6l5-1c2 1 1 4-1 5l-5 1z" fill="#8e8e8e" stroke="#6d245a" />
          <path d="M3 4l11-2M6 6L4 22" stroke="#f0b8df" strokeWidth="1.500" />
        </svg>
        <Caret className="ml-0.5 text-black" />
      </button>
      <Ribbon />
      <div className="h-[22px] border-t-2 border-[#d2d3d5] bg-[#dfe0e2]" />
      <div className="flex min-h-0 flex-1 border-t border-[#8a8a8a]">
        <aside className="mr-1 flex w-[173px] shrink-0 flex-col pl-px">
          <PropertiesPane />
          <BrowserPane />
        </aside>
        <DrawingWindow />
      </div>
      <StatusBar />
      <p className="pointer-events-none absolute right-5 bottom-0 text-[15px] leading-5 font-light text-[#6b7680]">http://www.grafica2d3d.com/</p>
    </div>
  )
}
